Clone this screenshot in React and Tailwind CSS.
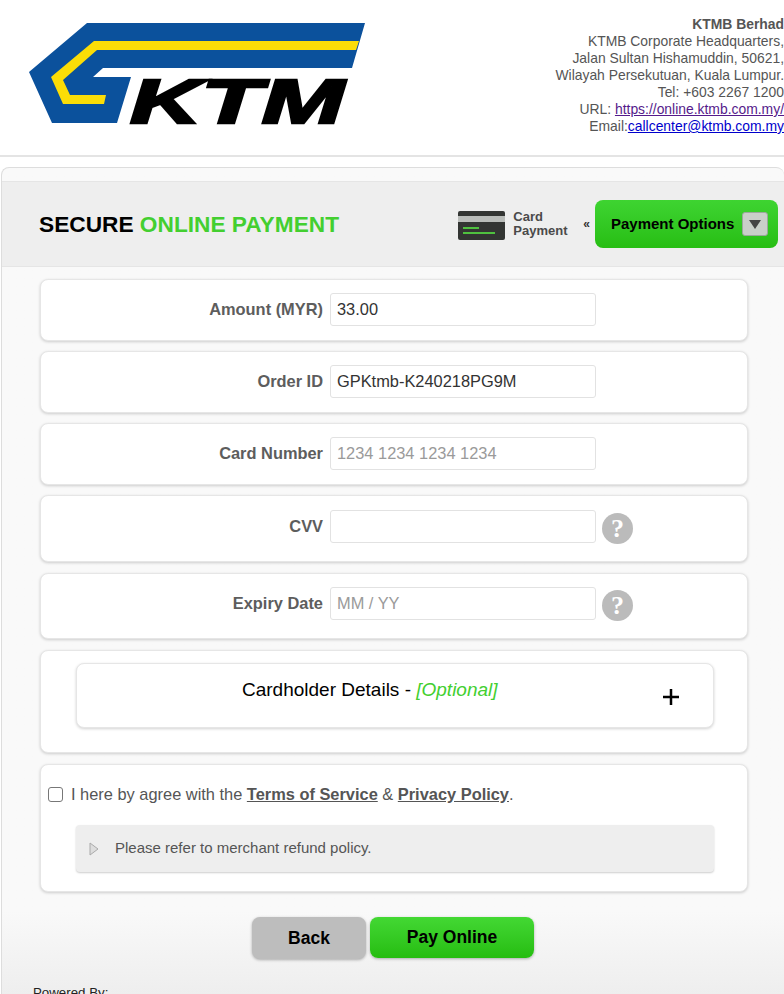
const cardCls = "bg-white rounded-lg border border-[#e6e6e6] shadow-[0_1px_3px_rgba(0,0,0,0.18)]";

function KtmLogo() {
  return (
    <svg width="400" height="130" viewBox="0 0 400 130" className="absolute left-0 top-0">
      <polygon points="87,23 365,23 352,68 103,68 93,77 131,77 117,123 52,123 29,72" fill="#0b519c" />
      <polygon points="94,41 359,41 356,50 97,50 63,80 70,95 106,95 104,104 63,104 51,77" fill="#fbdd07" />
      <text
        x="130"
        y="122.500"
        fontFamily="'Liberation Sans', sans-serif"
        fontWeight="700"
        fontStyle="italic"
        fontSize="63"
        textLength="214"
        lengthAdjust="spacingAndGlyphs"
        fill="#000"
        stroke="#000"
        strokeWidth="2.500"
      >
        KTM
      </text>
    </svg>
  );
}

function CardIcon() {
  return (
    <svg width="47" height="29" viewBox="0 0 47 29" className="mt-[2px]">
      <rect x="0" y="0" width="47" height="29" rx="2" fill="#333533" />
      <rect x="0" y="5" width="47" height="6" fill="#b9bcb9" />
      <rect x="5" y="16" width="16" height="2" fill="#4fc13f" />
      <rect x="5" y="21" width="32" height="2" fill="#4fc13f" />
    </svg>
  );
}

function HelpIcon() {
  return (
    <span className="ml-[6px] mt-[3px] flex h-[31px] w-[31px] items-center justify-center rounded-full bg-[#bbbbbb] text-[26px] font-bold text-white [font-family:'Liberation_Serif',serif]">
      ?
    </span>
  );
}

function FieldRow({ label, value, placeholder, help, size }) {
  const sizeCls =
    size === "cvv" ? "h-[67px] mb-[11px] pt-[14px]"
    : size === "expiry" ? "h-[66px] mb-[11px] pt-[13px]"
    : "h-[62px] mb-[10px] pt-[13px]";
  return (
    <div className={`${cardCls} flex items-start ${sizeCls}`}>
      <label className="w-[289px] pr-[7px] text-right text-[16.4px] leading-[33px] font-bold text-[#5d5d5d]">{label}</label>
      <input
        readOnly
        value={value || ""}
        placeholder={placeholder}
        className="h-[33px] w-[266px] rounded-[3px] border border-[#e2e2e2] bg-white px-[6px] text-[16.4px] text-[#333] outline-none placeholder:text-[#9a9a9a]"
      />
      {help && <HelpIcon />}
    </div>
  );
}

export default function App() {
  return (
    <div className="h-[994px] w-[784px] overflow-hidden bg-white [font-family:'Liberation_Sans',Arial,sans-serif]">
      {/* Merchant header */}
      <header className="relative h-[157px] border-b-2 border-[#e4e4e4] pt-[16px] text-right text-[13.9px] leading-[17px] text-[#555]">
        <KtmLogo />
        <p className="font-bold">KTMB Berhad</p>
        <p>KTMB Corporate Headquarters,</p>
        <p>Jalan Sultan Hishamuddin, 50621,</p>
        <p>Wilayah Persekutuan, Kuala Lumpur.</p>
        <p>Tel: +603 2267 1200</p>
        <p>
          URL: <a href="#" className="text-[#551a8b] underline">https://online.ktmb.com.my/</a>
        </p>
        <p>
          Email:<a href="#" className="text-[#0000cc] underline">callcenter@ktmb.com.my</a>
        </p>
      </header>

      <div className="h-[10px] bg-white" />

      {/* Payment panel */}
      <main className="ml-[1px] h-[827px] rounded-tl-lg rounded-tr-lg border-l border-t border-[#dddddd] bg-gradient-to-b from-[#f9f9f9] from-90% to-[#eeeeee]">
        <div className="h-[13px]" />
        <div className="flex h-[86px] items-center border-y border-[#e5e5e5] bg-[#eeeeee] pl-[37px]">
          <h1 className="text-[22.700px] font-bold text-black">
            SECURE <span className="text-[#43cf30]">ONLINE PAYMENT</span>
          </h1>
          <div className="ml-auto mr-[6px] flex items-center">
            <CardIcon />
            <p className="ml-[8px] w-[62px] text-[13px] leading-[14px] font-bold text-[#4a4a4a]">Card Payment</p>
            <span className="ml-[8px] text-[12px] font-bold text-[#333]">«</span>
            <button className="ml-[5px] flex h-[48px] w-[183px] items-center rounded-lg bg-gradient-to-b from-[#3ed431] to-[#27be12] pl-[16px] text-[15px] font-bold text-black">
              Payment Options
              <span className="ml-[8px] flex h-[24px] w-[26px] items-center justify-center rounded-[3px] border border-[#9aa79a] bg-[#c9cfc9]">
                <svg width="12" height="9" viewBox="0 0 12 9"><polygon points="0,0 12,0 6,9" fill="#444" /></svg>
              </span>
            </button>
          </div>
        </div>

        <div className="ml-[38px] mr-[36px] mt-[12px]">
          <FieldRow label="Amount (MYR)" value="33.00" />
          <FieldRow label="Order ID" value="GPKtmb-K240218PG9M" />
          <FieldRow label="Card Number" placeholder="1234 1234 1234 1234" />
          <FieldRow label="CVV" help size="cvv" />
          <FieldRow label="Expiry Date" placeholder="MM / YY" help size="expiry" />

          <div className={`${cardCls} mb-[11px] h-[103px] pl-[35px] pt-[12px]`}>
            <div className={`${cardCls} relative h-[65px] w-[638px] pt-[15px] pl-[165px] text-[19px] leading-[22px] text-black`}>
              Cardholder Details - <span className="italic text-[#43cf30]">[Optional]</span>
              <svg width="16" height="16" viewBox="0 0 16 16" className="absolute left-[586px] top-[25px]">
                <path d="M8 0v16M0 8h16" stroke="#000" strokeWidth="2.500" />
              </svg>
            </div>
          </div>

          <div className={`${cardCls} h-[128px] px-[7px] pt-[19px]`}>
            <div className="flex items-center text-[16.4px] leading-[20px] text-[#555]">
              <input type="checkbox" className="h-[15px] w-[15px] appearance-none rounded-[3px] border border-[#777] bg-white" />
              <span className="ml-[8px]">
                I here by agree with the <a href="#" className="font-bold underline">Terms of Service</a> &amp;{" "}
                <a href="#" className="font-bold underline">Privacy Policy</a>.
              </span>
            </div>
            <div className="ml-[28px] mt-[21px] flex h-[47px] w-[638px] items-center rounded-[4px] bg-[#eeeeee] pl-[13px] text-[15px] text-[#555] shadow-[0_1px_2px_rgba(0,0,0,0.2)]">
              <svg width="10" height="14" viewBox="0 0 10 14"><polygon points="1,1 9,7 1,13" fill="#dddddd" stroke="#aaaaaa" /></svg>
              <span className="ml-[16px]">Please refer to merchant refund policy.</span>
            </div>
          </div>

          <div className="ml-[212px] mt-[25px] flex items-start">
            <button className="h-[42px] w-[114px] rounded-lg bg-[#bdbdbd] text-[17.500px] font-bold text-black shadow-[0_1px_3px_rgba(0,0,0,0.3)]">Back</button>
            <button className="ml-[4px] h-[41px] w-[164px] rounded-lg bg-gradient-to-b from-[#43d833] to-[#25bd0e] text-[17.500px] font-bold text-black shadow-[0_1px_3px_rgba(0,0,0,0.3)]">Pay Online</button>
          </div>
          <p className="-ml-[7px] mt-[25px] text-[13.300px] leading-[17px] text-[#222]">Powered By:</p>
        </div>
      </main>
    </div>
  );
}
